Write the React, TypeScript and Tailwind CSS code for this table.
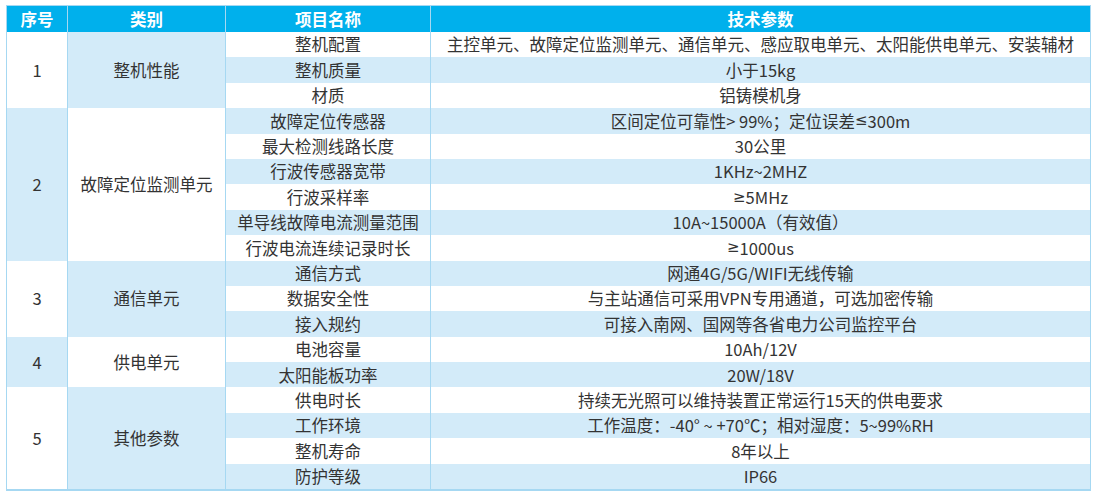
import React from "react";

type Group = { no: string; cat: string; items: [string, string][] };

const groups: Group[] = [
  {
    no: "1",
    cat: "整机性能",
    items: [
      ["整机配置", "主控单元、故障定位监测单元、通信单元、感应取电单元、太阳能供电单元、安装辅材"],
      ["整机质量", "小于15kg"],
      ["材质", "铝铸模机身"],
    ],
  },
  {
    no: "2",
    cat: "故障定位监测单元",
    items: [
      ["故障定位传感器", "区间定位可靠性> 99%；定位误差≤300m"],
      ["最大检测线路长度", "30公里"],
      ["行波传感器宽带", "1KHz~2MHZ"],
      ["行波采样率", "≥5MHz"],
      ["单导线故障电流测量范围", "10A~15000A（有效值）"],
      ["行波电流连续记录时长", "≥1000us"],
    ],
  },
  {
    no: "3",
    cat: "通信单元",
    items: [
      ["通信方式", "网通4G/5G/WIFI无线传输"],
      ["数据安全性", "与主站通信可采用VPN专用通道，可选加密传输"],
      ["接入规约", "可接入南网、国网等各省电力公司监控平台"],
    ],
  },
  {
    no: "4",
    cat: "供电单元",
    items: [
      ["电池容量", "10Ah/12V"],
      ["太阳能板功率", "20W/18V"],
    ],
  },
  {
    no: "5",
    cat: "其他参数",
    items: [
      ["供电时长", "持续无光照可以维持装置正常运行15天的供电要求"],
      ["工作环境", "工作温度：-40° ~ +70℃；相对湿度：5~99%RH"],
      ["整机寿命", "8年以上"],
      ["防护等级", "IP66"],
    ],
  },
];

const spanClass: Record<number, string> = {
  2: "row-span-2",
  3: "row-span-3",
  4: "row-span-4",
  6: "row-span-6",
};

const LIGHT = "bg-[#d3ebf9]";
const WHITE = "bg-white";

function Txt({ t }: { t: string }) {
  const parts = t.split(/([≥≤])/);
  return (
    <>
      {parts.map((p, i) =>
        p === "≥" || p === "≤" ? (
          <span key={i} style={{ fontFamily: '"DejaVu Sans", sans-serif' }} className="text-[15px]">
            {p}
          </span>
        ) : (
          <React.Fragment key={i}>{p}</React.Fragment>
        )
      )}
    </>
  );
}

export default function App() {
  let rowIdx = 0;
  return (
    <div
      className="w-[1098px] h-[495px] bg-white pt-[5px] pl-[6px]"
      style={{ fontFamily: '"Noto Sans CJK SC", "Noto Sans", sans-serif' }}
    >
      <div className="w-[1085px] border border-b-2 border-[#a6d8f2] grid grid-cols-[61px_158px_205px_1fr] grid-rows-[26px_repeat(18,25.4px)] text-[16.5px] text-[#333333] leading-none">
        {["序号", "类别", "项目名称", "技术参数"].map((h, i) => (
          <div
            key={h}
            className={`bg-[#00b0ec] text-white font-bold flex items-center justify-center ${
              i < 3 ? "border-r border-[#a6d8f2]" : ""
            }`}
          >
            {h}
          </div>
        ))}
        {groups.map((g, gi) => {
          const n = g.items.length;
          const colA = gi % 2 === 0 ? WHITE : LIGHT;
          const colB = gi % 2 === 0 ? LIGHT : WHITE;
          const cells: React.ReactNode[] = [];
          g.items.forEach((it, ii) => {
            const bg = rowIdx % 2 === 1 ? LIGHT : WHITE;
            const r = rowIdx;
            rowIdx++;
            if (ii === 0) {
              cells.push(
                <div
                  key={`n${gi}`}
                  className={`${spanClass[n]} ${colA} border-r border-[#a6d8f2] flex items-center justify-center`}
                >
                  {g.no}
                </div>
              );
              cells.push(
                <div
                  key={`c${gi}`}
                  className={`${spanClass[n]} ${colB} border-r border-[#a6d8f2] flex items-center justify-center`}
                >
                  {g.cat}
                </div>
              );
            }
            cells.push(
              <div
                key={`i${r}`}
                className={`${bg} border-r border-[#a6d8f2] flex items-center justify-center whitespace-nowrap`}
              >
                {it[0]}
              </div>
            );
            cells.push(
              <div
                key={`v${r}`}
                className={`${bg} flex items-center justify-center whitespace-nowrap`}
              >
                <Txt t={it[1]} />
              </div>
            );
          });
          return <React.Fragment key={gi}>{cells}</React.Fragment>;
        })}
      </div>
    </div>
  );
}
